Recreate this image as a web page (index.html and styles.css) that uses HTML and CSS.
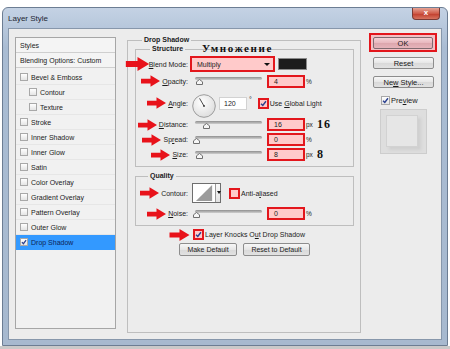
FILE: index.html
```html
<!DOCTYPE html>
<html lang="en">

<head>
    <meta charset="UTF-8">
    <title>Layer Style</title>
    <link rel="stylesheet" href="styles.css">
</head>

<body>
    <svg class="defs" width="0" height="0">
        <symbol id="arr" viewBox="0 0 20 12">
            <path d="M0 3.5 H10 V0 L20 6 L10 12 V8.5 H0 Z" fill="#e8121a" />
        </symbol>
        <symbol id="thumb" viewBox="0 0 7 6">
            <path d="M0.5 5.5 V2.8 L3.5 0.5 L6.5 2.8 V5.5 Z" fill="#f6f6f6" stroke="#6f6f6f" stroke-width="1" />
        </symbol>
        <symbol id="tick" viewBox="0 0 8 8">
            <path d="M1.2 4.2 L3.2 6.3 L6.8 1.4" fill="none" stroke="#2a3f8f" stroke-width="1.6" />
        </symbol>
    </svg>

    <div class="window">
        <div class="titlebar">
            <span class="title">Layer Style</span>
            <span class="close">x</span>
        </div>

        <div class="client">
            <ul class="styles">
                <li class="head">Styles</li>
                <li class="head">Blending Options: Custom</li>
                <li><span class="cb"></span>Bevel &amp; Emboss</li>
                <li class="sub"><span class="cb"></span>Contour</li>
                <li class="sub"><span class="cb"></span>Texture</li>
                <li><span class="cb"></span>Stroke</li>
                <li><span class="cb"></span>Inner Shadow</li>
                <li><span class="cb"></span>Inner Glow</li>
                <li><span class="cb"></span>Satin</li>
                <li><span class="cb"></span>Color Overlay</li>
                <li><span class="cb"></span>Gradient Overlay</li>
                <li><span class="cb"></span>Pattern Overlay</li>
                <li><span class="cb"></span>Outer Glow</li>
                <li class="sel"><span class="cb"><svg><use href="#tick" /></svg></span>Drop Shadow</li>
            </ul>

            <div class="group main">
                <span class="cap">Drop Shadow</span>

                <div class="group inner structure">
                    <span class="cap">Structure</span>
                    <span class="note">Умножение</span>

                    <div class="row tall">
                        <div class="lbl"><svg class="arrow big"><use href="#arr" /></svg><span><u>B</u>lend Mode:</span></div>
                        <div class="select hl">Multiply<span class="caret"></span></div>
                        <div class="swatch"></div>
                    </div>

                    <div class="row tall">
                        <div class="lbl"><svg class="arrow"><use href="#arr" /></svg><span><u>O</u>pacity:</span></div>
                        <div class="slider"><svg class="thumb" style="left:1px"><use href="#thumb" /></svg></div>
                        <div class="num hl">4</div>
                        <span class="unit">%</span>
                    </div>

                    <div class="row angle">
                        <div class="lbl"><svg class="arrow"><use href="#arr" /></svg><span><u>A</u>ngle:</span></div>
                        <svg class="dial" viewBox="0 0 24 24">
                            <defs>
                                <radialGradient id="dialbg" cx="0.4" cy="0.35" r="0.7">
                                    <stop offset="0" stop-color="#ffffff" />
                                    <stop offset="1" stop-color="#dcdcdc" />
                                </radialGradient>
                            </defs>
                            <circle cx="12" cy="12" r="11.3" fill="url(#dialbg)" stroke="#9c9c9c" />
                            <line x1="12" y1="12" x2="7.6" y2="4.4" stroke="#333" stroke-width="0.9" />
                            <circle cx="12" cy="12" r="0.9" fill="#333" />
                        </svg>
                        <div class="num plain">120</div>
                        <span class="deg">°</span>
                        <span class="chk hl"><svg><use href="#tick" /></svg></span>
                        <span class="chktext">Use <u>G</u>lobal Light</span>
                    </div>

                    <div class="row">
                        <div class="lbl"><svg class="arrow"><use href="#arr" /></svg><span><u>D</u>istance:</span></div>
                        <div class="slider"><svg class="thumb" style="left:8px"><use href="#thumb" /></svg></div>
                        <div class="num hl">16</div>
                        <span class="unit">px</span>
                        <span class="big-num">16</span>
                    </div>

                    <div class="row">
                        <div class="lbl"><svg class="arrow"><use href="#arr" /></svg><span>Sp<u>r</u>ead:</span></div>
                        <div class="slider"><svg class="thumb" style="left:-2px"><use href="#thumb" /></svg></div>
                        <div class="num hl">0</div>
                        <span class="unit">%</span>
                    </div>

                    <div class="row">
                        <div class="lbl"><svg class="arrow"><use href="#arr" /></svg><span><u>S</u>ize:</span></div>
                        <div class="slider"><svg class="thumb" style="left:1px"><use href="#thumb" /></svg></div>
                        <div class="num hl">8</div>
                        <span class="unit">px</span>
                        <span class="big-num">8</span>
                    </div>
                </div>

                <div class="group inner quality">
                    <span class="cap">Quality</span>

                    <div class="row contour-row">
                        <div class="lbl"><svg class="arrow"><use href="#arr" /></svg><span>Contour:</span></div>
                        <div class="contour">
                            <svg class="curve" viewBox="0 0 20 20">
                                <rect x="0" y="0" width="20" height="20" fill="#fff" />
                                <path d="M1 19 L19 1 V19 Z" fill="#9b9b9b" />
                            </svg>
                            <span class="drop"></span>
                        </div>
                        <span class="chk hl anti"></span>
                        <span class="chktext">Anti-a<u>l</u>iased</span>
                    </div>

                    <div class="row noise">
                        <div class="lbl"><svg class="arrow"><use href="#arr" /></svg><span><u>N</u>oise:</span></div>
                        <div class="slider"><svg class="thumb" style="left:-2px"><use href="#thumb" /></svg></div>
                        <div class="num hl">0</div>
                        <span class="unit">%</span>
                    </div>
                </div>

                <div class="knock">
                    <svg class="arrow"><use href="#arr" /></svg>
                    <span class="chk hl"><svg><use href="#tick" /></svg></span>
                    <span class="chktext">Layer Knocks O<u>u</u>t Drop Shadow</span>
                </div>

                <div class="defaults">
                    <button class="btn make">Make Default</button>
                    <button class="btn reset">Reset to Default</button>
                </div>
            </div>

            <div class="side">
                <div class="ok-frame"><button class="btn ok">OK</button></div>
                <button class="btn side-btn">Reset</button>
                <button class="btn side-btn">Ne<u>w</u> Style...</button>
                <div class="preview-chk">
                    <span class="cb on"><svg><use href="#tick" /></svg></span>
                    <span>Pre<u>v</u>iew</span>
                </div>
                <div class="preview"><div class="swatch-prev"></div></div>
            </div>
        </div>
    </div>
    <div class="desk"></div>
</body>

</html>
```

FILE: styles.css
```css
* {
    box-sizing: border-box;
}

body {
    margin: 0;
    background: #fff;
    font-family: "Liberation Sans", Arial, sans-serif;
    font-size: 7px;
    color: #1b1b1b;
}

.defs {
    position: absolute;
    width: 0;
    height: 0;
}

u {
    text-decoration-thickness: 1px;
    text-underline-offset: 1px;
}

/* window frame */

.window {
    margin: 7px 2px 0 2px;
    width: 446px;
    height: 339px;
    padding: 0 5px 5px 5px;
    display: flex;
    flex-direction: column;
    background: linear-gradient(#c4d2e4, #a9bcd3 40px, #a7b9cf);
    border: 1px solid #6c7d93;
    border-radius: 6px 6px 0 0;
}

.titlebar {
    height: 20px;
    display: flex;
    align-items: center;
    justify-content: space-between;
}

.title {
    font-size: 8px;
    color: #1e2733;
}

.close {
    align-self: flex-start;
    width: 28px;
    height: 12px;
    margin-right: 2px;
    border: 1px solid #7a3a34;
    border-top: none;
    border-radius: 0 0 4px 4px;
    background: linear-gradient(#e7a496, #cf5a48 50%, #c2402f 55%, #d7735f);
    color: #fff;
    font-weight: bold;
    font-size: 8px;
    line-height: 10px;
    text-align: center;
}

.desk {
    height: 10px;
    background: #c9c9c9;
}

.client {
    flex: 1;
    display: grid;
    grid-template-columns: 101px 245px 76px;
    align-items: start;
    padding: 4px 4px 0 6px;
    background: #ececec;
    border: 1px solid #8797ab;
}

/* styles list */

.styles {
    list-style: none;
    margin: 4px 0 0 0;
    padding: 0;
    height: 292px;
    background: #f1f1f1;
    border: 1px solid #a6a6a6;
}

.styles li {
    height: 15px;
    display: flex;
    align-items: center;
    padding-left: 4px;
    border-bottom: 1px solid #e6e6e6;
}

.styles li.head {
    border-bottom: 1px solid #cfcfcf;
    background: #f4f4f4;
}

.styles li.head + li:not(.head) {
    margin-top: 2px;
}

.styles li.sub {
    padding-left: 13px;
}

.styles li.sel {
    background: #3399ff;
    color: #0c2457;
    border-bottom-color: #3399ff;
}

.cb {
    width: 8px;
    height: 8px;
    margin-right: 3px;
    border: 1px solid #a8a8a8;
    background: linear-gradient(#ffffff, #e4e4e4);
    display: inline-flex;
}

.cb svg,
.chk svg {
    width: 100%;
    height: 100%;
}

/* group boxes */

.group {
    position: relative;
    border: 1px solid #bebebe;
}

.group .cap {
    position: absolute;
    top: -6px;
    left: 14px;
    padding: 0 2px;
    line-height: 10px;
    font-weight: bold;
    background: #ececec;
}

.main {
    margin: 7px 0 0 11px;
    width: 234px;
    height: 293px;
}

.inner {
    margin: 8px 6px 0 7px;
}

.structure {
    height: 118px;
    padding-top: 6px;
}

.quality {
    height: 50px;
    margin-top: 9px;
    padding-top: 6px;
}

.quality .cap {
    left: 12px;
}

.note {
    position: absolute;
    left: 66px;
    top: -8px;
    font-family: "Liberation Serif", "DejaVu Serif", serif;
    font-weight: bold;
    font-size: 11px;
    letter-spacing: 1.6px;
    color: #111;
}

.row {
    display: flex;
    align-items: center;
    height: 15px;
}

.row.tall {
    height: 16px;
}

.row.tall + .row.tall {
    margin-top: 1px;
}

.row.angle {
    height: 28px;
}

.lbl {
    width: 52px;
    flex: none;
    display: flex;
    align-items: center;
    justify-content: flex-end;
    gap: 2px;
    white-space: nowrap;
}

.arrow {
    width: 19px;
    height: 12px;
    flex: none;
}

.arrow.big {
    width: 25px;
    height: 14px;
    margin-right: -3px;
}

.hl {
    border: 2px solid #e3161c;
    background: #ffcaca;
}

.select {
    margin-left: 2px;
    width: 85px;
    height: 16px;
    padding-left: 5px;
    display: flex;
    align-items: center;
    position: relative;
}

.caret {
    position: absolute;
    right: 3px;
    top: 5px;
    border-left: 3px solid transparent;
    border-right: 3px solid transparent;
    border-top: 3px solid #111;
}

.swatch {
    margin-left: 3px;
    width: 29px;
    height: 12px;
    background: #1c1c1c;
    border: 1px solid #8a8a8a;
}

.slider {
    position: relative;
    margin-left: 7px;
    width: 67px;
    height: 14px;
    flex: none;
}

.slider::before {
    content: "";
    position: absolute;
    left: 0;
    right: 0;
    top: 3px;
    height: 3px;
    border-radius: 2px;
    background: linear-gradient(#8f8f8f, #cfcfcf);
}

.thumb {
    position: absolute;
    top: 5px;
    width: 7px;
    height: 6px;
}

.num {
    margin-left: 5px;
    width: 38px;
    height: 13px;
    flex: none;
    padding-left: 5px;
    display: flex;
    align-items: center;
}

.unit {
    margin-left: 1px;
    font-size: 6.5px;
}

.big-num {
    margin-left: 4px;
    font-family: "Liberation Serif", "DejaVu Serif", serif;
    font-weight: bold;
    font-size: 12px;
    letter-spacing: 1px;
    color: #111;
}

.dial {
    margin: 5px 0 0 4px;
    width: 24px;
    height: 24px;
    flex: none;
}

.num.plain {
    margin-left: 3px;
    width: 28px;
    background: #fff;
    border: 1px solid #d2d2d2;
    padding-left: 4px;
}

.deg {
    margin-left: 2px;
    align-self: flex-start;
    margin-top: 7px;
}

.chk {
    width: 11px;
    height: 11px;
    flex: none;
    display: inline-flex;
}

.row.angle .chk {
    margin-left: 6px;
}

.chktext {
    margin-left: 1px;
    white-space: nowrap;
}

.contour-row {
    height: 20px;
}

.contour {
    margin-left: 4px;
    width: 29px;
    height: 20px;
    display: flex;
    border: 1px solid #6e6e6e;
    background: #fff;
}

.curve {
    width: 22px;
    height: 18px;
}

.drop {
    flex: 1;
    border-left: 1px solid #9a9a9a;
    background: linear-gradient(#fafafa, #e2e2e2);
    position: relative;
}

.drop::after {
    content: "";
    position: absolute;
    left: 1px;
    top: 7px;
    border-left: 2px solid transparent;
    border-right: 2px solid transparent;
    border-top: 3px solid #111;
}

.chk.anti {
    margin-left: 8px;
}

.row.noise {
    margin-top: 3px;
}

.knock {
    display: flex;
    align-items: center;
    height: 13px;
    margin: 2px 0 0 41px;
}

.knock .arrow {
    width: 21px;
    margin-right: 3px;
}

.defaults {
    display: flex;
    gap: 6px;
    margin: 2px 0 0 51px;
}

.btn {
    font-family: "Liberation Sans", Arial, sans-serif;
    font-size: 7px;
    color: #1b1b1b;
    height: 13px;
    padding: 0;
    border: 1px solid #8d8d8d;
    border-radius: 2px;
    background: linear-gradient(#f7f7f7, #e6e6e6 50%, #d9d9d9 52%, #e2e2e2);
}

.btn.make {
    width: 58px;
}

.btn.reset {
    width: 67px;
}

/* right column */

.side {
    margin-left: 8px;
    display: flex;
    flex-direction: column;
    align-items: flex-start;
}

.ok-frame {
    width: 68px;
    height: 19px;
    border: 2px solid #e3161c;
    background: #f3c0c4;
    padding: 2px 2px 0 2px;
}

.btn.ok {
    width: 60px;
    height: 12px;
    font-size: 7.5px;
    border-color: #7e6a70;
    background: linear-gradient(#f3d2d6, #e8b7be 50%, #dca6ad 52%, #e6b4bb);
}

.side-btn {
    margin: 5px 0 0 4px;
    width: 61px;
    height: 12px;
    font-size: 7.5px;
}

.side-btn + .side-btn {
    margin-top: 7px;
}

.preview-chk {
    margin: 8px 0 0 12px;
    display: flex;
    align-items: center;
    font-size: 7.5px;
}

.preview-chk .cb {
    width: 9px;
    height: 9px;
    margin-right: 1px;
}

.preview {
    margin: 4px 0 0 11px;
    width: 47px;
    height: 45px;
    border: 1px solid #cdcdcd;
    background: #dedede;
    padding: 5px;
}

.swatch-prev {
    width: 32px;
    height: 32px;
    border: 1px solid #d2d2d2;
    background: #e6e6e6;
    box-shadow: 3px 3px 3px #cfcfcf;
}
```
